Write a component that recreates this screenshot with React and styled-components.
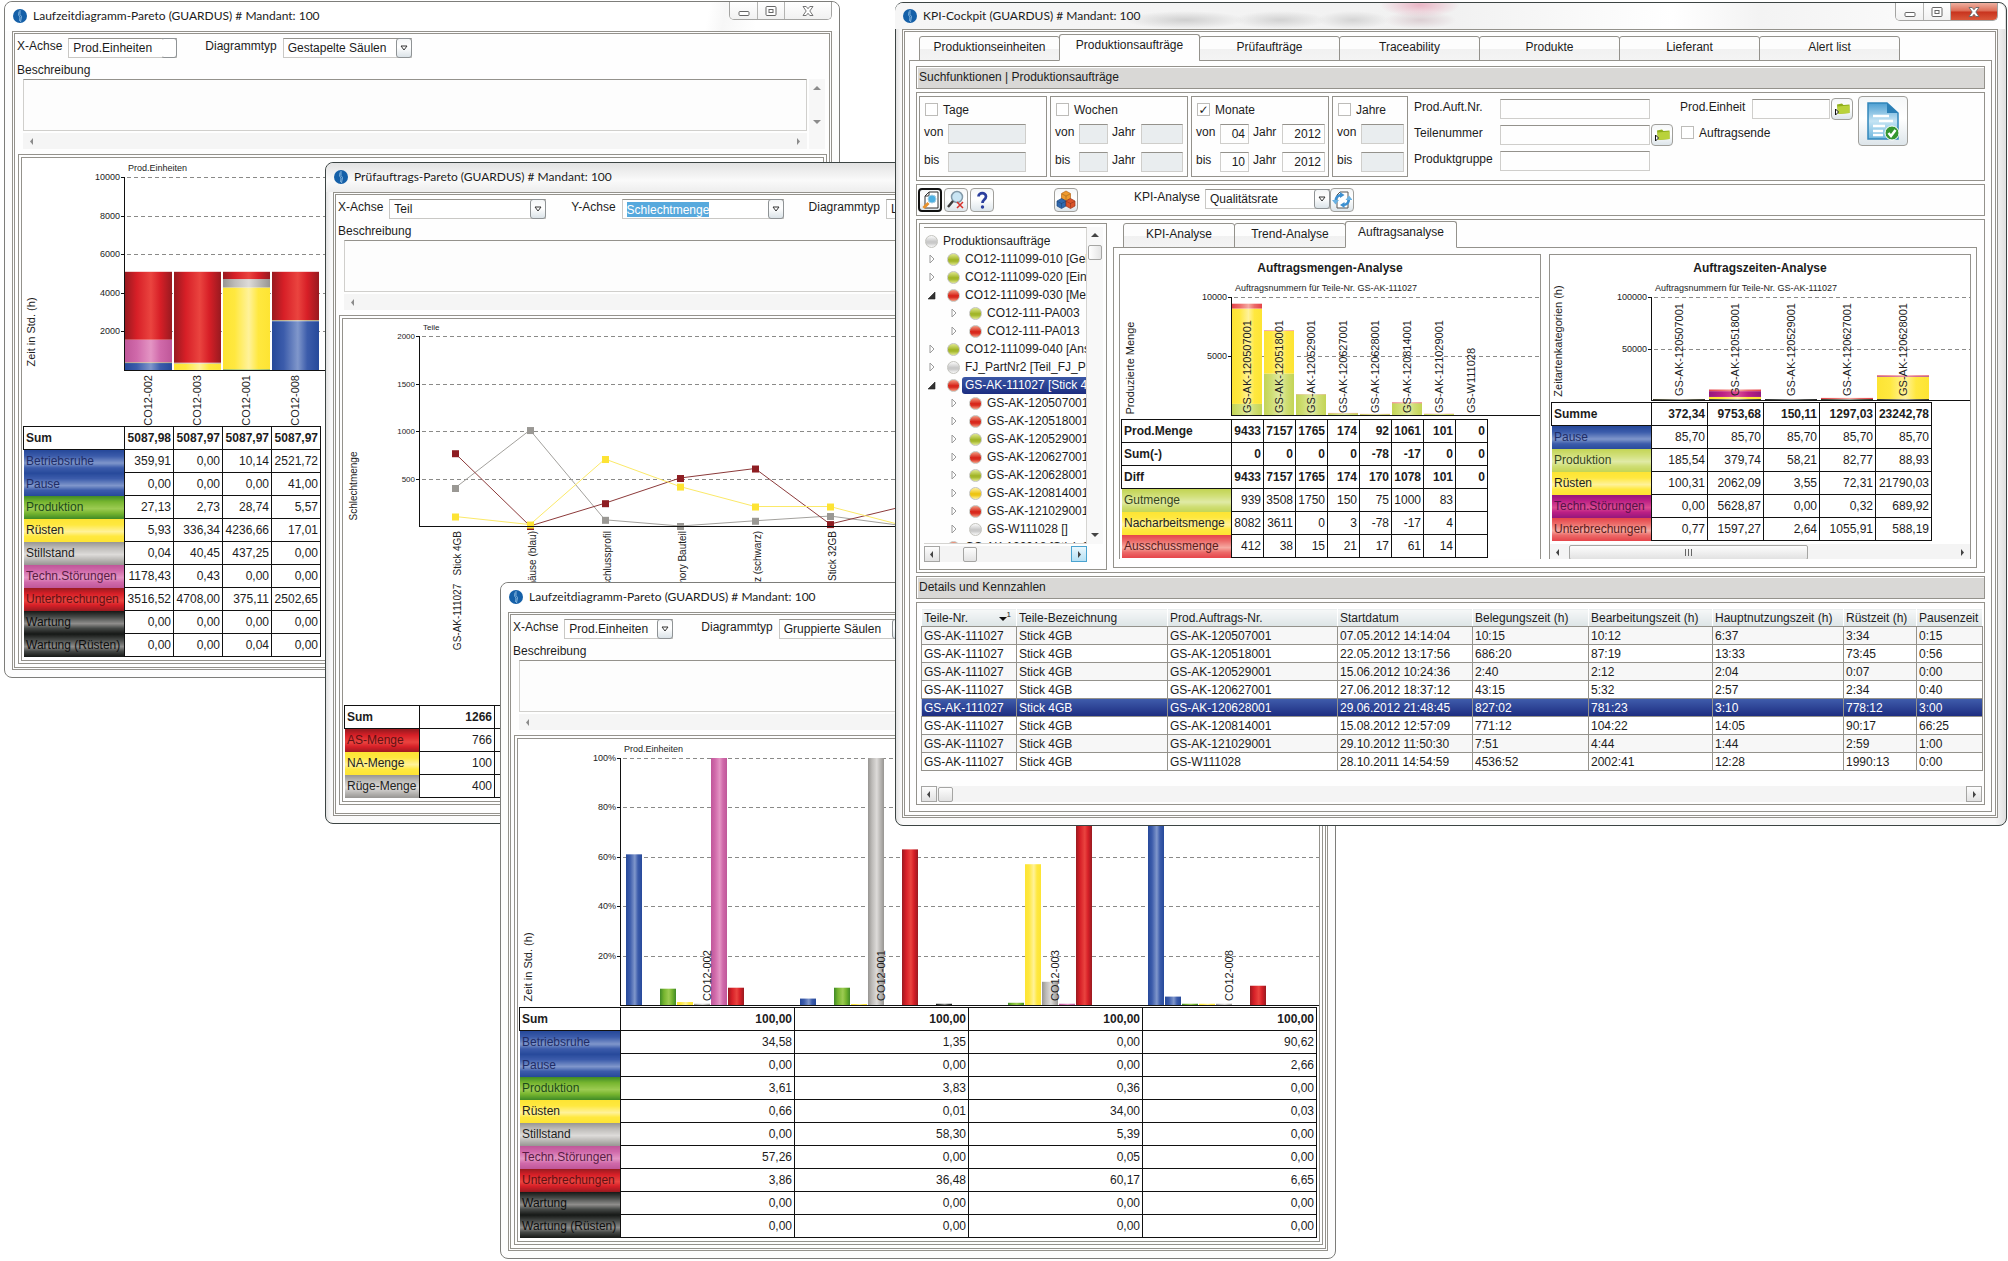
import React, { useId } from 'react';
import styled, { createGlobalStyle, css } from 'styled-components';

const GlobalStyle = createGlobalStyle`
  * {
    box-sizing: border-box;
  }

  body {
    margin: 0;
    background: #fff;
    color: #1c1c1c;
    font: 12px/16px "Liberation Sans", Arial, sans-serif;
  }

  button, input, select, textarea {
    margin: 0;
    font: inherit;
    color: inherit;
    outline: none;
  }
`;

const LINE = '#94928c';

const tones = {
  blue: ['#26499a', '#3c5cab', '#8097cb'],
  red: ['#981a20', '#d71f27', '#ea443f'],
  yellow: ['#fde433', '#ffe83f', '#fff29a'],
  green: ['#3f8a26', '#76b52f', '#9ccb52'],
  grey: ['#979592', '#bdbbb8', '#dddbd9'],
  pink: ['#bf5799', '#d069aa', '#e495c4'],
  black: ['#151816', '#454846', '#8f8e8c'],
  lime: ['#c3d455', '#cfde74', '#e0eaa6'],
  salmon: ['#e5444a', '#ec6a68', '#f6aaa2'],
  magenta: ['#94177c', '#bb1f84', '#dc4a92'],
};

const toneFill = (tone, dir = 'to bottom') => {
  const [edge, body, shine] = tones[tone];
  return `linear-gradient(${dir}, ${edge}, ${body} 25%, ${shine} 55%, ${body} 75%, ${edge})`;
};

/* ---------- windows ---------- */

const Desktop = styled.main`
  position: relative;
  min-height: 100vh;
  overflow: hidden;
  background: #fff;
`;

const WindowBox = styled.section`
  position: absolute;
  left: ${({ $left }) => $left}px;
  top: ${({ $top }) => $top}px;
  ${({ $width }) => ($width ? `width: ${$width}px;` : 'right: 1px;')}
  border: 1px solid ${({ $dark }) => ($dark ? '#3c4443' : '#7d7d7a')};
  border-radius: 8px;
  padding: 0 ${({ $width }) => ($width ? '7px 7px 7px' : '8px 7px 6px')};
  background: ${({ $dark }) =>
    $dark
      ? 'linear-gradient(to right, #e2e2e2, #fafafa 5px, #fff 40%, #f7f7f7 99%, #e0e0e0)'
      : '#fdfdfd'};
`;

const TitleBar = styled.header`
  display: flex;
  align-items: center;
  gap: 6px;
  height: ${({ $height }) => $height}px;
  margin: 0 -7px;
  padding: 0 0 1px 8px;
  border-radius: 8px 8px 0 0;
  background: ${({ $look }) =>
    ({
      plain: 'linear-gradient(100deg, #fff 84%, #f7f7f7 86%, #fff 90%)',
      smoke: 'linear-gradient(to bottom, #e2e2e2, #fafafa 60%, #ededed)',
      cockpit:
        'radial-gradient(ellipse 40px 12px at 525px 2px, #e9b4c4, transparent), radial-gradient(ellipse 60px 9px at 290px 17px, #cfcfcf, transparent), radial-gradient(ellipse 46px 9px at 385px 17px, #d2d2d2, transparent), radial-gradient(ellipse 36px 9px at 458px 17px, #d4d4d4, transparent), radial-gradient(ellipse 36px 9px at 525px 17px, #dccfd3, transparent), linear-gradient(to right, #f6f6f6, #f1f1f1 50%, #fff 70%, #f3f3f3 78%, #fff)',
    })[$look]};

  h2 {
    flex: 1;
    margin: 0;
    font: 12px/18px Lato, "Open Sans", sans-serif;
  }
`;

const CaptionButtons = styled.div`
  display: flex;
  align-self: flex-start;
  height: 18px;
  margin-right: 7px;
  border: 1px solid #a4a4a2;
  border-top: 0;
  border-radius: 0 0 5px 5px;
  overflow: hidden;
`;

const CaptionButton = styled.button`
  display: grid;
  place-items: center;
  width: ${({ $wide }) => ($wide ? 47 : 27)}px;
  padding: 0;
  border: 0;
  border-left: ${({ $first }) => ($first ? 0 : '1px solid #b4b4b2')};
  color: ${({ $red }) => ($red ? '#fff' : '#6b6b6b')};
  background: ${({ $red }) =>
    $red ? 'linear-gradient(#eeb0a0, #dc6c55 48%, #c8331d 52%, #d9573a)' : 'linear-gradient(#fff, #f1f1f1)'};
`;

const Frame = styled.div`
  border: 3px double ${LINE};
  background: #fefefe;
  padding: ${({ $pad }) => $pad};
`;

const Logo = () => (
  <svg width="14" height="14" viewBox="0 0 14 14" aria-hidden="true">
    <circle cx="7" cy="7" r="7" fill="#1560a8" />
    <path d="M7 1v4.500l1.500 2-1 5.500M6 2.500L5.600 6l1.400 2-.4 4" fill="none" stroke="#9cc6e8" strokeWidth=".8" />
  </svg>
);

const Captions = ({ red }) => (
  <CaptionButtons>
    <CaptionButton type="button" aria-label="Minimieren" $first>
      <svg width="12" height="12">
        <rect x="1" y="6.500" width="10" height="4" rx="1" fill="#fff" stroke="#666" />
      </svg>
    </CaptionButton>
    <CaptionButton type="button" aria-label="Maximieren">
      <svg width="12" height="12">
        <rect x="1" y="1.500" width="10" height="9" rx="1" fill="#fff" stroke="#666" />
        <rect x="4" y="4.500" width="4" height="3" fill="#fff" stroke="#666" />
      </svg>
    </CaptionButton>
    <CaptionButton type="button" aria-label="Schließen" $wide $red={red}>
      <svg width="12" height="12">
        <path
          d="M1 1.500h3.200L6 3.700l1.800-2.200H11L7.800 6l3.200 4.500H7.800L6 8.300l-1.800 2.200H1L4.200 6z"
          fill="#fff"
          stroke="#666"
          strokeWidth=".9"
        />
      </svg>
    </CaptionButton>
  </CaptionButtons>
);

const AppWindow = ({ title, look = 'plain', barHeight = 29, captions, closeRed, dark, pad = '0', children, ...pos }) => (
  <WindowBox $left={pos.left} $top={pos.top} $width={pos.width} $dark={dark}>
    <TitleBar $look={look} $height={barHeight}>
      <Logo />
      <h2>{title}</h2>
      {captions && <Captions red={closeRed} />}
    </TitleBar>
    <Frame $pad={pad}>{children}</Frame>
  </WindowBox>
);

/* ---------- form parts ---------- */

const ComboBox = styled.span`
  display: grid;
  grid-template-columns: 1fr 16px;
  flex: none;
  width: ${({ $width }) => $width}px;
  height: 20px;
  border: 1px solid #c9c8c5;
  border-top-color: ${LINE};
  background: #fff;

  select, input {
    grid-area: 1 / 1 / 2 / 3;
    appearance: none;
    min-width: 0;
    height: 18px;
    padding: 0 4px;
    border: 0;
    border-radius: 0;
    background: transparent;
  }

  input {
    justify-self: start;
    align-self: center;
    field-sizing: content;
    height: 15px;
    margin-left: 4px;
    padding: 0;
    background: #57a9dd;
    color: #fff;
  }
`;

const ComboArrow = styled.span`
  grid-area: 1 / 2 / 2 / 3;
  display: grid;
  place-items: center;
  height: 20px;
  margin: -1px -1px 0 1px;
  border: 1px solid #8f9395;
  border-left-color: ${({ $blank }) => ($blank ? '#fff' : '#8f9395')};
  border-radius: 3px;
  pointer-events: none;
  background: ${({ $blank }) => ($blank ? '#fff' : 'linear-gradient(#f4f6f7, #fff 45%, #dbe3e8)')};
`;

const Combo = ({ id, value, width, marked, blank }) => (
  <ComboBox $width={width}>
    {marked ? (
      <input id={id} defaultValue={value} role="combobox" aria-expanded="false" />
    ) : (
      <select id={id} defaultValue={value}>
        <option>{value}</option>
      </select>
    )}
    <ComboArrow $blank={blank}>
      {!blank && (
        <svg width="8" height="6">
          <path d="M1 1h6L4 5z" fill="#fff" stroke="#333" />
        </svg>
      )}
    </ComboArrow>
  </ComboBox>
);

const AxisRow = styled.div`
  display: flex;
  align-items: flex-start;
  gap: ${({ $gap }) => $gap}px;
  height: 24px;
  padding: 4px 0 0 2px;
  overflow: hidden;
  white-space: nowrap;
`;

const LabelledCombo = styled.div`
  display: flex;
  flex: none;
  align-items: flex-start;
  gap: 6px;
`;

const DescLabel = styled.label`
  display: block;
  padding: 4px 0 1px 2px;
`;

const DescArea = styled.div`
  display: grid;
  grid-template: 52px 16px / 1fr 16px;
  gap: 2px;
  padding: 0 4px 0 8px;

  textarea {
    resize: none;
    border: 1px solid #d0cfcc;
    border-top-color: ${LINE};
    background: #fdfdfd;
    overflow: hidden;
  }
`;

const SideScroll = styled.div`
  grid-column: 2;
  grid-row: 1 / 3;
  display: flex;
  flex-direction: column;
  justify-content: space-between;
  align-items: center;
  padding: 5px 0 22px;
  background: #f7f7f7;
`;

const FootScroll = styled.div`
  display: flex;
  justify-content: space-between;
  align-items: center;
  height: 16px;
  padding: 0 5px;
  background: #f5f5f5;
`;

const arrows = {
  left: 'M5 1v7L2 4.500z',
  right: 'M3 1v7l3-3.500z',
  up: 'M0 6h8L4 2z',
  down: 'M0 2h8L4 6z',
};

const Arrow = ({ dir, color = '#8b8b8b' }) => (
  <svg width="8" height="9" aria-hidden="true">
    <path d={arrows[dir]} fill={color} />
  </svg>
);

const Description = () => {
  const id = useId();
  return (
    <>
      <DescLabel htmlFor={id}>Beschreibung</DescLabel>
      <DescArea>
        <textarea id={id} />
        <SideScroll>
          <Arrow dir="up" />
          <Arrow dir="down" />
        </SideScroll>
        <FootScroll>
          <Arrow dir="left" />
          <Arrow dir="right" />
        </FootScroll>
      </DescArea>
    </>
  );
};

const AxisControls = ({ fields, gap }) => {
  const id = useId();
  return (
    <AxisRow $gap={gap}>
      {fields.map((f) => (
        <LabelledCombo key={f.label}>
          <label htmlFor={id + f.label}>{f.label}</label>
          <Combo id={id + f.label} {...f} />
        </LabelledCombo>
      ))}
    </AxisRow>
  );
};

const ChartPanel = styled.div`
  margin: 5px 2px 0 3px;
  padding: 2px;
  border: 1px solid ${LINE};

  > div {
    padding-bottom: 3px;
    border: 1px solid ${LINE};
    background: #fff;
    overflow: hidden;
  }
`;

/* ---------- charts ---------- */

const ChartSvg = styled.svg`
  display: block;
  width: 100%;
  height: ${({ $height }) => $height}px;
  font-size: 9px;
  fill: #1c1c1c;

  .upright {
    font-size: ${({ $upright }) => $upright}px;
  }

  .heading {
    font-size: 12px;
    font-weight: bold;
  }
`;

const Gradients = () => (
  <svg width="0" height="0" style={{ position: 'absolute' }} aria-hidden="true">
    <defs>
      {Object.entries(tones).map(([name, [edge, body, shine]]) => (
        <linearGradient key={name} id={`tone-${name}`}>
          <stop offset="0" stopColor={edge} />
          <stop offset=".25" stopColor={body} />
          <stop offset=".55" stopColor={shine} />
          <stop offset=".75" stopColor={body} />
          <stop offset="1" stopColor={edge} />
        </linearGradient>
      ))}
    </defs>
  </svg>
);

const Upright = ({ x, y, anchor = 'start', children }) => (
  <text
    className="upright"
    transform={`translate(${x} ${y}) rotate(-90)`}
    textAnchor={anchor}
    dominantBaseline="central"
    xmlSpace="preserve"
  >
    {children}
  </text>
);

const Chart = ({ height, axisX, top, base, ticks, heading, caption, yLabel, yLabelAt, upright = 11, small, children }) => (
  <ChartSvg $height={height} $upright={upright}>
    {heading && (
      <text className="heading" x="50%" y="17" textAnchor="middle">
        {heading}
      </text>
    )}
    <text x={axisX + 4} y={top - 6} fontSize={small ? 8 : 9}>
      {caption}
    </text>
    {ticks.map((label, i) => {
      const y = Math.round(top + (i * (base - top)) / ticks.length);
      return (
        <g key={label}>
          <text x={axisX - 4} y={y + 3} textAnchor="end" fontSize={small ? 8 : 9}>
            {label}
          </text>
          <path d={`M${axisX - 3} ${y + 0.5}h3`} stroke="#111" />
          <line x1={axisX + 3} x2="100%" y1={y + 0.5} y2={y + 0.5} stroke="#8a8a88" strokeDasharray="4 3" />
        </g>
      );
    })}
    {children}
    <line x1={axisX + 0.5} x2={axisX + 0.5} y1={top} y2={base} stroke="#111" />
    <line x1={axisX} x2="100%" y1={base + 0.5} y2={base + 0.5} stroke="#111" />
    <Upright x={yLabelAt[0]} y={yLabelAt[1]} anchor="middle">
      {yLabel}
    </Upright>
  </ChartSvg>
);

// values run from the bottom of the stack to its top
const Stack = ({ x, width, base, scale, parts }) => {
  let y = base;
  return parts.map(([tone, value], i) => {
    const h = Math.max(value, 0) * scale;
    y -= h;
    return <rect key={i} x={x} y={y} width={width} height={h} fill={`url(#tone-${tone})`} />;
  });
};

const MatrixTable = styled.table`
  border-collapse: collapse;
  table-layout: fixed;
  width: ${({ $width }) => $width}px;
  margin-left: 1px;
  white-space: nowrap;

  tr {
    height: 23px;
  }

  th, td {
    padding: 0 2px;
    border: 1px solid #111;
    font-weight: normal;
    overflow: hidden;
  }

  th {
    text-align: left;
    padding-right: 0;
  }

  td {
    text-align: right;
  }
`;

const MatrixRow = styled.tr`
  ${({ $bold }) => $bold && css`
    && th, && td {
      font-weight: bold;
    }
  `}

  ${({ $tone }) => $tone && css`
    && th {
      border-top: 0;
      border-bottom: 0;
      border-left-color: transparent;
      background: ${toneFill($tone)};
      color: ${{
        blue: '#202c66',
        green: '#1c4a1c',
        red: '#5f1214',
        pink: '#5a1c44',
        magenta: '#551248',
        salmon: '#5a1c1c',
        black: '#0d0d0d',
        lime: '#36451c',
      }[$tone] || '#22221c'};
    }
  `}
`;

const Matrix = ({ rows, labelWidth, cellWidth, columns }) => (
  <MatrixTable $width={labelWidth + cellWidth * columns}>
    <colgroup>
      <col width={labelWidth} />
      {Array.from({ length: columns }, (_, i) => (
        <col key={i} width={cellWidth} />
      ))}
    </colgroup>
    <tbody>
      {rows.map(({ label, tone, values }) => (
        <MatrixRow key={label} $tone={tone} $bold={!tone}>
          <th scope="row">{label}</th>
          {Array.from({ length: columns }, (_, i) => (
            <td key={i}>{values[i]}</td>
          ))}
        </MatrixRow>
      ))}
    </tbody>
  </MatrixTable>
);

/* ---------- pareto windows ---------- */

const row = (label, tone, text) => ({ label, tone, values: text.split(' ') });

const runtimeRows = [
  row('Sum', null, '5087,98 5087,97 5087,97 5087,97'),
  row('Betriebsruhe', 'blue', '359,91 0,00 10,14 2521,72'),
  row('Pause', 'blue', '0,00 0,00 0,00 41,00'),
  row('Produktion', 'green', '27,13 2,73 28,74 5,57'),
  row('Rüsten', 'yellow', '5,93 336,34 4236,66 17,01'),
  row('Stillstand', 'grey', '0,04 40,45 437,25 0,00'),
  row('Techn.Störungen', 'pink', '1178,43 0,43 0,00 0,00'),
  row('Unterbrechungen', 'red', '3516,52 4708,00 375,11 2502,65'),
  row('Wartung', 'black', '0,00 0,00 0,00 0,00'),
  row('Wartung (Rüsten)', 'black', '0,00 0,00 0,04 0,00'),
];

const percentRows = [
  row('Sum', null, '100,00 100,00 100,00 100,00'),
  row('Betriebsruhe', 'blue', '34,58 1,35 0,00 90,62'),
  row('Pause', 'blue', '0,00 0,00 0,00 2,66'),
  row('Produktion', 'green', '3,61 3,83 0,36 0,00'),
  row('Rüsten', 'yellow', '0,66 0,01 34,00 0,03'),
  row('Stillstand', 'grey', '0,00 58,30 5,39 0,00'),
  row('Techn.Störungen', 'pink', '57,26 0,00 0,05 0,00'),
  row('Unterbrechungen', 'red', '3,86 36,48 60,17 6,65'),
  row('Wartung', 'black', '0,00 0,00 0,00 0,00'),
  row('Wartung (Rüsten)', 'black', '0,00 0,00 0,00 0,00'),
];

const defectRows = [
  row('Sum', null, '1266'),
  row('AS-Menge', 'red', '766'),
  row('NA-Menge', 'yellow', '100'),
  row('Rüge-Menge', 'grey', '400'),
];

const toNumber = (text) => parseFloat(String(text).replace(',', '.')) || 0;

const StackedPareto = () => (
  <AppWindow left={4} top={1} width={836} title="Laufzeitdiagramm-Pareto (GUARDUS) # Mandant: 100" captions pad="0 0 3px">
    <AxisControls
      gap={28}
      fields={[
        { label: 'X-Achse', value: 'Prod.Einheiten', width: 109, blank: true },
        { label: 'Diagrammtyp', value: 'Gestapelte Säulen', width: 129 },
      ]}
    />
    <Description />
    <ChartPanel>
      <div>
        <Chart
          height={268}
          axisX={102}
          top={19}
          base={212}
          ticks={['10000', '8000', '6000', '4000', '2000']}
          caption="Prod.Einheiten"
          yLabel="Zeit in Std. (h)"
          yLabelAt={[9, 174]}
        >
          {['CO12-002', 'CO12-003', 'CO12-001', 'CO12-008'].map((name, i) => (
            <g key={name}>
              <Stack
                x={103 + i * 49}
                width={47}
                base={212}
                scale={0.0193}
                parts={runtimeRows.slice(1).map((r) => [r.tone, toNumber(r.values[i])])}
              />
              <Upright x={126 + i * 49} y={217} anchor="end">
                {name}
              </Upright>
            </g>
          ))}
        </Chart>
        <Matrix rows={runtimeRows} labelWidth={101} cellWidth={49} columns={4} />
      </div>
    </ChartPanel>
  </AppWindow>
);

const defectSeries = [
  { color: '#a3a19d', marker: '#9a9894', values: [400, 1010, 65, 0, 55, 105, 0] },
  { color: '#8c3a3a', marker: '#8e1d22', values: [766, 0, 240, 505, 605, 20, 210] },
  { color: '#fbe968', marker: '#fde334', values: [100, 15, 705, 415, 205, 205, 0] },
];

const defectParts = [
  'GS-AK-111027   Stick 4GB',
  'Gehäuse (blau)',
  'Abschlussprofil',
  'Memory Bauteil',
  'Schutz (schwarz)',
  'Stick 32GB',
];

const LinePareto = () => {
  const px = (i) => 112 + i * 75;
  const py = (v) => 207 - v * 0.095;
  return (
    <AppWindow
      left={325}
      top={162}
      width={836}
      title="Prüfauftrags-Pareto (GUARDUS) # Mandant: 100"
      look="smoke"
      dark
      captions
      pad="0 0 8px"
    >
      <AxisControls
        gap={25}
        fields={[
          { label: 'X-Achse', value: 'Teil', width: 157 },
          { label: 'Y-Achse', value: 'Schlechtmenge', width: 162, marked: true },
          { label: 'Diagrammtyp', value: 'Linien', width: 120 },
        ]}
      />
      <Description />
      <ChartPanel>
        <div>
          <Chart
            height={386}
            axisX={76}
            top={17}
            base={207}
            ticks={['2000', '1500', '1000', '500']}
            caption="Teile"
            yLabel="Schlechtmenge"
            yLabelAt={[10, 167]}
            upright={10}
            small
          >
            {defectSeries.map((s) => (
              <g key={s.color}>
                <polyline points={s.values.map((v, i) => `${px(i)},${py(v)}`).join(' ')} fill="none" stroke={s.color} />
                {s.values.map((v, i) => (
                  <rect key={i} x={px(i) - 3} y={py(v) - 3} width="7" height="7" fill={s.marker} />
                ))}
              </g>
            ))}
            {defectParts.map((name, i) => (
              <Upright key={name} x={114 + i * 75} y={212} anchor="end">
                {name}
              </Upright>
            ))}
          </Chart>
          <Matrix rows={defectRows} labelWidth={75} cellWidth={75} columns={6} />
        </div>
      </ChartPanel>
    </AppWindow>
  );
};

const groupTones = ['blue', 'blue', 'green', 'yellow', 'grey', 'pink', 'red', 'black', 'black'];

const groups = [
  { name: 'CO12-002', bars: [61, 0, 6.6, 1.2, 0.5, 100, 7, 0, 0] },
  { name: 'CO12-001', bars: [2.6, 0, 7, 0.4, 100, 0, 63, 0, 0.5] },
  { name: 'CO12-003', bars: [0, 0, 0.9, 57, 9.4, 0.5, 100, 0, 0] },
  { name: 'CO12-008', bars: [100, 3.4, 0.5, 0.5, 0.5, 0, 7.8, 0, 0] },
];

const GroupedPareto = () => (
  <AppWindow left={500} top={582} width={836} title="Laufzeitdiagramm-Pareto (GUARDUS) # Mandant: 100" captions pad="0 0 3px">
    <AxisControls
      gap={28}
      fields={[
        { label: 'X-Achse', value: 'Prod.Einheiten', width: 109 },
        { label: 'Diagrammtyp', value: 'Gruppierte Säulen', width: 129 },
      ]}
    />
    <Description />
    <ChartPanel>
      <div>
        <Chart
          height={268}
          axisX={102}
          top={19}
          base={266}
          ticks={['100%', '80%', '60%', '40%', '20%']}
          caption="Prod.Einheiten"
          yLabel="Zeit in Std. (h)"
          yLabelAt={[10, 228]}
        >
          {groups.map(({ name, bars }, g) => (
            <g key={name}>
              {bars.map((v, i) => (
                <Stack
                  key={i}
                  x={108 + g * 174 + i * 17}
                  width={16}
                  base={266}
                  scale={2.47}
                  parts={[[groupTones[i], v]]}
                />
              ))}
              <Upright x={189 + g * 174} y={262}>
                {name}
              </Upright>
            </g>
          ))}
        </Chart>
        <Matrix rows={percentRows} labelWidth={101} cellWidth={174} columns={4} />
      </div>
    </ChartPanel>
  </AppWindow>
);

/* ---------- KPI cockpit ---------- */

const TabStrip = styled.div`
  display: flex;
  align-items: flex-end;
  margin-bottom: -1px;
  padding-left: ${({ $indent }) => $indent}px;
`;

const Tab = styled.button`
  flex: 0 1 ${({ $width }) => $width}px;
  height: ${({ $active }) => ($active ? 27 : 25)}px;
  margin-right: -1px;
  padding: 0 0 ${({ $active }) => ($active ? 6 : 3)}px;
  border: 1px solid ${LINE};
  border-bottom-color: ${({ $active }) => ($active ? '#fefefe' : LINE)};
  border-radius: 3px 3px 0 0;
  background: ${({ $active }) =>
    $active ? '#fefefe' : 'linear-gradient(#fdfdfd 50%, #f1f1f1 52%, #f4f4f4)'};
`;

const TabPanel = styled.div`
  display: flex;
  flex-direction: column;
  gap: 3px;
  margin: 0 3px 0 4px;
  padding: 5px 6px 6px;
  border: 1px solid ${LINE};
`;

const Band = styled.h3`
  height: 23px;
  margin: 0;
  padding: 0 2px;
  border: 1px solid ${LINE};
  box-shadow: inset 1px 1px #fff;
  background: #d9d8d6;
  font: 12px/20px "Liberation Sans", Arial, sans-serif;
`;

const Panel = styled.div`
  display: flex;
  padding: ${({ $pad }) => $pad};
  border: 1px solid ${LINE};
`;

const PeriodBox = styled.fieldset`
  display: flex;
  flex-direction: column;
  gap: 8px;
  width: ${({ $width }) => $width}px;
  height: 81px;
  min-width: 0;
  margin: 0 3px 0 0;
  padding: 6px 0 0 4px;
  border: 1px solid ${LINE};
`;

const CheckLabel = styled.label`
  display: flex;
  align-items: center;
  gap: 5px;
  height: 13px;
  padding-left: 1px;

  input {
    display: grid;
    place-items: center;
    appearance: none;
    width: 13px;
    height: 13px;
    border: 1px solid #bdbcb9;
    background: #fff;
  }

  input:checked::after {
    content: "✓";
    font: bold 12px/12px "DejaVu Sans", sans-serif;
  }
`;

const PeriodRow = styled.div`
  display: flex;
  align-items: flex-start;
  height: 20px;

  label:first-child {
    width: 24px;
  }

  label:nth-of-type(2) {
    width: 29px;
    margin-left: 4px;
  }
`;

const TextField = styled.input`
  width: ${({ $width }) => $width}px;
  height: 20px;
  padding: 0 3px;
  border: 1px solid #cfcecb;
  border-top-color: ${LINE};
  border-radius: 0;
  background: ${({ disabled }) => (disabled ? '#e9edef' : '#fefefe')};
  text-align: right;
`;

const Period = ({ width, label, fields, values = [], checked }) => {
  const id = useId();
  return (
    <PeriodBox $width={width}>
      <CheckLabel>
        <input type="checkbox" defaultChecked={checked} />
        {label}
      </CheckLabel>
      {['von', 'bis'].map((edge, r) => (
        <PeriodRow key={edge}>
          {fields.map((w, c) => (
            <React.Fragment key={c}>
              <label htmlFor={`${id}${edge}${c}`}>{c ? 'Jahr' : edge}</label>
              <TextField id={`${id}${edge}${c}`} $width={w} disabled={!checked} defaultValue={values[r]?.[c]} />
            </React.Fragment>
          ))}
        </PeriodRow>
      ))}
    </PeriodBox>
  );
};

const SearchStack = styled.div`
  display: flex;
  flex-direction: column;
  gap: 6px;
  margin-left: ${({ $gap }) => $gap}px;
  padding-top: 3px;
`;

const SearchRow = styled.div`
  display: flex;
  align-items: flex-start;
  height: 20px;
  padding-top: ${({ $check }) => ($check ? 1 : 0)}px;

  > label:not(${CheckLabel}) {
    width: ${({ $label }) => $label}px;
  }
`;

const IconButton = styled.button`
  display: grid;
  place-items: center;
  flex: none;
  width: ${({ $size }) => $size}px;
  height: ${({ $size }) => $size}px;
  padding: 0;
  border: ${({ $strong }) => ($strong ? '2px solid #111' : '1px solid #a09f9b')};
  border-radius: 4px;
  background: linear-gradient(#f5f7f8, #fff 45%, #dde5ea);
`;

const FolderButton = styled(IconButton)`
  width: 22px;
  height: 22px;
  margin: -1px 0 0 1px;
`;

const ReportButton = styled(IconButton)`
  margin-left: 5px;
`;

const Folder = () => (
  <svg width="18" height="18" viewBox="0 0 18 18">
    <path d="M4 4.500l5-1 1.500 1.500 6-.5v8.500L5 14z" fill="#8fae1c" />
    <path d="M4.500 6.500l12-1v7.500L5 14z" fill="#b9d23a" />
    <path d="M2.500 9v6l3-3z" fill="#fff" stroke="#111" />
  </svg>
);

const ReportIcon = () => (
  <svg width="36" height="42" viewBox="0 0 36 42">
    <defs>
      <linearGradient id="sheet" x2="0" y2="1">
        <stop offset="0" stopColor="#4d9fd2" />
        <stop offset=".5" stopColor="#c5e4f4" />
        <stop offset="1" stopColor="#6fb7df" />
      </linearGradient>
    </defs>
    <path d="M3 3h19l11 10v26H3z" fill="url(#sheet)" stroke="#3287bb" strokeWidth="1.500" />
    <path d="M22 3v10h11z" fill="#2b7fb6" />
    <path d="M8 16h16M14 21h14M8 26h12M8 31h10M8 35h10" stroke="#fff" strokeWidth="2.500" />
    <circle cx="27" cy="33" r="7" fill="#35962f" stroke="#fff" />
    <path d="M23.500 33l2.500 3 4.500-6" fill="none" stroke="#fff" strokeWidth="2.500" />
  </svg>
);

const SearchDocIcon = () => (
  <svg width="20" height="20" viewBox="0 0 20 20">
    <path d="M5 6l4-4h9v16H5z" fill="#fff" stroke="#333" />
    <path d="M5 6h4V2" fill="none" stroke="#333" />
    <circle cx="12" cy="9" r="4" fill="#4db0e2" stroke="#a6cfe4" />
    <path d="M8.500 13l-5 5" stroke="#e7922d" strokeWidth="3" />
  </svg>
);

const SearchClearIcon = () => (
  <svg width="20" height="20" viewBox="0 0 20 20">
    <circle cx="11" cy="7" r="5.500" fill="#c9e5f4" stroke="#8299a8" strokeWidth="1.500" />
    <path d="M7 11l-5 6" stroke="#3b3b3b" strokeWidth="2.500" />
    <path d="M11 12l6 6M17 12l-6 6" stroke="#d6312b" strokeWidth="1.500" />
  </svg>
);

const HelpIcon = () => (
  <svg width="20" height="20" viewBox="0 0 20 20">
    <path
      d="M6.500 6.500C6.500 2 14 2 14 6.500c0 3-3.500 3-3.500 6.500"
      fill="none"
      stroke="#2b3f9e"
      strokeWidth="2.700"
    />
    <circle cx="10.500" cy="17" r="1.700" fill="#2b3f9e" />
  </svg>
);

const hexagon = (x, y) => `M${x} ${y - 5}l4.500 2.500v5L${x} ${y + 5}l-4.500-2.500v-5z`;

const CubesIcon = () => (
  <svg width="20" height="20" viewBox="0 0 20 20">
    <path d={hexagon(10, 6)} fill="#ef9a2e" stroke="#b5651a" strokeWidth=".7" />
    <path d={hexagon(5.5, 13.5)} fill="#2f68ae" stroke="#1b4680" strokeWidth=".7" />
    <path d={hexagon(14.5, 13.5)} fill="#d9532a" stroke="#98321a" strokeWidth=".7" />
    <path
      d="M6 4l4 2 4-2M10 6v4M1.500 11.500l4 2 4-2M5.500 13.500v4M10.500 11.500l4 2 4-2M14.500 13.500v4"
      fill="none"
      stroke="#000"
      strokeOpacity=".2"
    />
  </svg>
);

const RefreshIcon = () => (
  <svg width="20" height="20" viewBox="0 0 20 20">
    <path d="M5 5l3-3h8v16H5z" fill="#fff" stroke="#555" />
    <path d="M3.500 11a6.500 6.500 0 0 1 5-6" fill="none" stroke="#3c8fd0" strokeWidth="2.500" />
    <path d="M8 2l4.500 3L8 8z" fill="#3c8fd0" />
    <path d="M17 9a6.500 6.500 0 0 1-5 6" fill="none" stroke="#3c8fd0" strokeWidth="2.500" />
    <path d="M12.500 12L8 15l4.500 3z" fill="#3c8fd0" />
    <path d="M0 10h7l-3.500 4.500zM13.500 10h7L17 5.500z" fill="#69b1e2" />
  </svg>
);

const SearchForm = () => {
  const id = useId();
  return (
    <Panel $pad="3px 2px">
      <Period width={128} label="Tage" fields={[78]} />
      <Period width={138} label="Wochen" fields={[29, 42]} />
      <Period width={138} label="Monate" fields={[29, 43]} values={[['04', '2012'], ['10', '2012']]} checked />
      <Period width={76} label="Jahre" fields={[43]} />
      <SearchStack $gap={3}>
        {['Prod.Auft.Nr.', 'Teilenummer', 'Produktgruppe'].map((label, i) => (
          <SearchRow key={label} $label={86}>
            <label htmlFor={id + label}>{label}</label>
            <TextField id={id + label} $width={150} />
            {i === 1 && (
              <FolderButton type="button" aria-label="Teil wählen">
                <Folder />
              </FolderButton>
            )}
          </SearchRow>
        ))}
      </SearchStack>
      <SearchStack $gap={7}>
        <SearchRow $label={72}>
          <label htmlFor={`${id}unit`}>Prod.Einheit</label>
          <TextField id={`${id}unit`} $width={78} />
          <FolderButton type="button" aria-label="Einheit wählen">
            <Folder />
          </FolderButton>
        </SearchRow>
        <SearchRow $check>
          <CheckLabel>
            <input type="checkbox" />
            Auftragsende
          </CheckLabel>
        </SearchRow>
      </SearchStack>
      <ReportButton type="button" aria-label="Auswertung starten" $size={50}>
        <ReportIcon />
      </ReportButton>
    </Panel>
  );
};

const ToolGroup = styled.div`
  display: flex;
  align-items: flex-start;
  gap: 2px;
  margin-right: ${({ $after }) => $after}px;
`;

const KpiPicker = styled.div`
  display: flex;
  align-items: flex-start;
  padding-top: 1px;

  label {
    width: 71px;
  }
`;

const Toolbar = () => (
  <Panel $pad="3px 1px">
    <ToolGroup $after={60}>
      <IconButton type="button" aria-label="Suchen" $size={24} $strong>
        <SearchDocIcon />
      </IconButton>
      <IconButton type="button" aria-label="Suche löschen" $size={24}>
        <SearchClearIcon />
      </IconButton>
      <IconButton type="button" aria-label="Hilfe" $size={24}>
        <HelpIcon />
      </IconButton>
    </ToolGroup>
    <ToolGroup $after={56}>
      <IconButton type="button" aria-label="Module" $size={24}>
        <CubesIcon />
      </IconButton>
    </ToolGroup>
    <KpiPicker>
      <label htmlFor="kpi">KPI-Analyse</label>
      <Combo id="kpi" value="Qualitätsrate" width={125} />
    </KpiPicker>
    <IconButton type="button" aria-label="Aktualisieren" $size={24}>
      <RefreshIcon />
    </IconButton>
  </Panel>
);

const TreeBox = styled.div`
  display: grid;
  grid-template: 317px 16px / 1fr 16px;
  row-gap: 2px;
  flex: none;
  width: 188px;
  height: 347px;
  margin: 2px 6px 0 0;
  padding: 3px 3px 0 4px;
  border: 1px solid ${LINE};
`;

const TreeList = styled.ul`
  margin: 0;
  padding: 4px 0 0;
  border: 1px solid #d5d4d1;
  border-top-color: ${LINE};
  border-left: 0;
  list-style: none;
  overflow: hidden;
  white-space: nowrap;
`;

const TreeItem = styled.li`
  display: flex;
  align-items: center;
  height: 18px;
  padding-left: ${({ $level }) => Math.max($level - 1, 0) * 22}px;

  > svg {
    flex: none;
    width: ${({ $level }) => ($level ? 22 : 0)}px;
  }
`;

const bullets = {
  grey: ['#fafafa', '#c9c9c9'],
  green: ['#dfe88c', '#a3b62a'],
  red: ['#f29a80', '#d8281c'],
  yellow: ['#fff1a0', '#eec514'],
};

const Bullet = styled.i`
  flex: none;
  width: 13px;
  height: 13px;
  margin: 0 2px 0 1px;
  border: 1px solid #c4c4be;
  border-radius: 50%;
  background: ${({ $color }) =>
    `linear-gradient(${bullets[$color][0]}, ${bullets[$color][1]} 50%, ${bullets[$color][1]} 65%, ${bullets[$color][0]})`};
`;

const ItemText = styled.span`
  flex: 1;
  padding: 0 3px;
  line-height: 17px;

  ${({ $selected }) => $selected && css`
    border-radius: 3px 0 0 3px;
    background: linear-gradient(#3a57a6, #1c2d80);
    color: #fff;
  `}
`;

const tree = [
  [0, 'grey', 'Produktionsaufträge'],
  [1, 'green', 'CO12-111099-010 [Gehäuse]'],
  [1, 'green', 'CO12-111099-020 [Einsatz]'],
  [1, 'red', 'CO12-111099-030 [Memory]', true],
  [2, 'green', 'CO12-111-PA003'],
  [2, 'red', 'CO12-111-PA013'],
  [1, 'green', 'CO12-111099-040 [Anschluss]'],
  [1, 'grey', 'FJ_PartNr2 [Teil_FJ_PartNr2]'],
  [1, 'red', 'GS-AK-111027 [Stick 4GB]', true],
  [2, 'red', 'GS-AK-120507001'],
  [2, 'red', 'GS-AK-120518001'],
  [2, 'green', 'GS-AK-120529001'],
  [2, 'red', 'GS-AK-120627001'],
  [2, 'green', 'GS-AK-120628001'],
  [2, 'yellow', 'GS-AK-120814001'],
  [2, 'red', 'GS-AK-121029001'],
  [2, 'grey', 'GS-W111028 []'],
  [1, 'red', 'GS-AK-120018 [Stick 8GB]'],
];

const VerticalBar = styled.div`
  display: flex;
  flex-direction: column;
  align-items: center;
  padding: 4px 0;
  background: #f8f8f8;

  i {
    width: 14px;
    height: 15px;
    margin: 5px 0 auto;
    border: 1px solid #a5a5a3;
    border-radius: 2px;
    background: linear-gradient(to right, #fff, #e4e4e4);
  }
`;

const HorizontalBar = styled.div`
  display: flex;
  align-items: center;
  height: 16px;
  margin-top: ${({ $gap }) => $gap || 0}px;
  background: #f4f4f4;
`;

const ScrollButton = styled.button`
  display: grid;
  place-items: center;
  width: 16px;
  height: 16px;
  padding: 0;
  border: ${({ $flat }) => ($flat ? '0' : '1px solid #a5a5a3')};
  border-color: ${({ $hot }) => $hot && '#4aa3cf'};
  background: ${({ $flat, $hot }) =>
    $flat ? 'transparent' : $hot ? 'linear-gradient(#eaf7fd, #b5e0f4)' : 'linear-gradient(#fdfdfd, #e2e2e2)'};
`;

const Thumb = styled.i`
  display: grid;
  place-items: center;
  width: ${({ $width }) => $width}px;
  height: 15px;
  margin: 0 auto 0 ${({ $left }) => $left}px;
  border: 1px solid #a5a5a3;
  border-radius: 2px;
  background: linear-gradient(#fdfdfd, #e2e2e2);
`;

const Scroller = ({ left, width, flat, hot, gap, grip }) => (
  <HorizontalBar $gap={gap}>
    <ScrollButton type="button" aria-label="Nach links" $flat={flat}>
      <Arrow dir="left" color="#444" />
    </ScrollButton>
    <Thumb $left={left} $width={width}>
      {grip && (
        <svg width="8" height="7">
          <path d="M.5 0v7M3.500 0v7M6.500 0v7" stroke="#666" />
        </svg>
      )}
    </Thumb>
    <ScrollButton type="button" aria-label="Nach rechts" $flat={flat} $hot={hot}>
      <Arrow dir="right" color="#444" />
    </ScrollButton>
  </HorizontalBar>
);

const OrderTree = () => (
  <TreeBox>
    <TreeList>
      {tree.map(([level, color, text, open]) => (
        <TreeItem key={text} $level={level}>
          <svg height="12" viewBox="0 0 22 12">
            {open ? (
              <path d="M11 3v7H4z" fill="#333" stroke="#222" strokeWidth=".6" />
            ) : (
              <path d="M6 2v8l4-4z" fill="#fff" stroke="#9b9b9b" />
            )}
          </svg>
          <Bullet $color={color} />
          <ItemText $selected={text.startsWith('GS-AK-111027')}>{text}</ItemText>
        </TreeItem>
      ))}
    </TreeList>
    <VerticalBar>
      <Arrow dir="up" color="#444" />
      <i />
      <Arrow dir="down" color="#444" />
    </VerticalBar>
    <Scroller left={23} width={14} hot />
  </TreeBox>
);

const quantityRows = [
  row('Prod.Menge', null, '9433 7157 1765 174 92 1061 101 0'),
  row('Sum(-)', null, '0 0 0 0 -78 -17 0 0'),
  row('Diff', null, '9433 7157 1765 174 170 1078 101 0'),
  row('Gutmenge', 'lime', '939 3508 1750 150 75 1000 83'),
  row('Nacharbeitsmenge', 'yellow', '8082 3611 0 3 -78 -17 4'),
  row('Ausschussmenge', 'salmon', '412 38 15 21 17 61 14'),
];

const timeRows = [
  row('Summe', null, '372,34 9753,68 150,11 1297,03 23242,78'),
  row('Pause', 'blue', '85,70 85,70 85,70 85,70 85,70'),
  row('Produktion', 'lime', '185,54 379,74 58,21 82,77 88,93'),
  row('Rüsten', 'yellow', '100,31 2062,09 3,55 72,31 21790,03'),
  row('Techn.Störungen', 'magenta', '0,00 5628,87 0,00 0,32 689,92'),
  row('Unterbrechungen', 'salmon', '0,77 1597,27 2,64 1055,91 588,19'),
];

const orders = [
  'GS-AK-120507001',
  'GS-AK-120518001',
  'GS-AK-120529001',
  'GS-AK-120627001',
  'GS-AK-120628001',
  'GS-AK-120814001',
  'GS-AK-121029001',
  'GS-W111028',
];

const Analysis = styled.div`
  flex: 1;
  min-width: 0;
  margin-right: 5px;
`;

const AnalysisPanel = styled.div`
  display: flex;
  gap: 8px;
  height: 321px;
  padding: 6px 5px;
  border: 1px solid ${LINE};
`;

const AnalysisCard = styled.div`
  flex: 1;
  min-width: 0;
  height: 305px;
  border: 1px solid ${LINE};
  border-bottom: 0;
  background: #fff;
  overflow: hidden;
`;

const OrderAnalysis = () => (
  <Analysis>
    <TabStrip $indent={10} role="tablist">
      {['KPI-Analyse', 'Trend-Analyse', 'Auftragsanalyse'].map((name, i) => (
        <Tab key={name} type="button" role="tab" $width={112} $active={i === 2}>
          {name}
        </Tab>
      ))}
    </TabStrip>
    <AnalysisPanel>
      <AnalysisCard>
        <Chart
          height={164}
          axisX={111}
          top={42}
          base={160}
          ticks={['10000', '5000']}
          heading="Auftragsmengen-Analyse"
          caption="Auftragsnummern für Teile-Nr. GS-AK-111027"
          yLabel="Produzierte Menge"
          yLabelAt={[10, 113]}
        >
          {orders.map((name, i) => (
            <g key={name}>
              <Stack
                x={112 + i * 32}
                width={30}
                base={160}
                scale={0.0118}
                parts={quantityRows.slice(3).map((r) => [r.tone, toNumber(r.values[i])])}
              />
              <Upright x={127 + i * 32} y={158}>
                {name}
              </Upright>
            </g>
          ))}
        </Chart>
        <Matrix rows={quantityRows} labelWidth={110} cellWidth={32} columns={8} />
      </AnalysisCard>
      <AnalysisCard>
        <Chart
          height={147}
          axisX={101}
          top={42}
          base={145}
          ticks={['100000', '50000']}
          heading="Auftragszeiten-Analyse"
          caption="Auftragsnummern für Teile-Nr. GS-AK-111027"
          yLabel="Zeitartenkategorien (h)"
          yLabelAt={[8, 86]}
        >
          {orders.slice(0, 5).map((name, i) => (
            <g key={name}>
              <Stack
                x={103 + i * 56}
                width={52}
                base={145}
                scale={0.00103}
                parts={[['black', 900], ...timeRows.slice(3).map((r) => [r.tone, toNumber(r.values[i])])]}
              />
              <Upright x={129 + i * 56} y={141}>
                {name}
              </Upright>
            </g>
          ))}
        </Chart>
        <Matrix rows={timeRows} labelWidth={100} cellWidth={56} columns={5} />
        <Scroller left={3} width={239} gap={3} flat grip />
      </AnalysisCard>
    </AnalysisPanel>
  </Analysis>
);

const DetailsPanel = styled.div`
  height: 203px;
  padding: 5px 2px 0 4px;
  border: 1px solid ${LINE};
`;

const DetailsTable = styled.table`
  width: 100%;
  border-collapse: collapse;
  table-layout: fixed;
  white-space: nowrap;

  th, td {
    height: 18px;
    padding: 0 2px;
    border: 1px solid ${LINE};
    font-weight: normal;
    line-height: 16px;
    text-align: left;
    overflow: hidden;
  }

  th {
    border-color: #fff;
    border-bottom-color: ${LINE};
    background: linear-gradient(#f6f8f8, #dde4e6);
  }

  sup {
    font-size: 8px;
    line-height: 8px;
  }
`;

const SortMark = styled.span`
  float: right;
  padding-right: 3px;
`;

const DetailsRow = styled.tr`
  background: #fff;

  &:nth-child(odd) {
    background: #f7f7f7;
  }

  ${({ $selected }) => $selected && css`
    && {
      background: linear-gradient(#3f5cab, #1b2a7e);
      color: #fff;
    }

    && td {
      border-left-color: #c9cde0;
      border-top-color: #c9cde0;
    }
  `}
`;

const detailColumns = [
  ['Teile-Nr.', 95],
  ['Teile-Bezeichnung', 151],
  ['Prod.Auftrags-Nr.', 170],
  ['Startdatum', 135],
  ['Belegungszeit (h)', 116],
  ['Bearbeitungszeit (h)', 124],
  ['Hauptnutzungszeit (h)', 131],
  ['Rüstzeit (h)', 73],
  ['Pausenzeit', 66],
];

const details = [
  ['GS-AK-120507001', '07.05.2012 14:14:04', '10:15', '10:12', '6:37', '3:34', '0:15'],
  ['GS-AK-120518001', '22.05.2012 13:17:56', '686:20', '87:19', '13:33', '73:45', '0:56'],
  ['GS-AK-120529001', '15.06.2012 10:24:36', '2:40', '2:12', '2:04', '0:07', '0:00'],
  ['GS-AK-120627001', '27.06.2012 18:37:12', '43:15', '5:32', '2:57', '2:34', '0:40'],
  ['GS-AK-120628001', '29.06.2012 21:48:45', '827:02', '781:23', '3:10', '778:12', '3:00'],
  ['GS-AK-120814001', '15.08.2012 12:57:09', '771:12', '104:22', '14:05', '90:17', '66:25'],
  ['GS-AK-121029001', '29.10.2012 11:50:30', '7:51', '4:44', '1:44', '2:59', '1:00'],
  ['GS-W111028', '28.10.2011 14:54:59', '4536:52', '2002:41', '12:28', '1990:13', '0:00'],
];

const Details = () => (
  <DetailsPanel>
    <DetailsTable>
      <colgroup>
        {detailColumns.map(([name, width]) => (
          <col key={name} width={width} />
        ))}
      </colgroup>
      <thead>
        <tr>
          {detailColumns.map(([name], i) => (
            <th key={name} scope="col">
              {name}
              {i === 0 && (
                <SortMark>
                  <svg width="8" height="6">
                    <path d="M0 1h8L4 5z" fill="#111" />
                  </svg>
                  <sup>1</sup>
                </SortMark>
              )}
            </th>
          ))}
        </tr>
      </thead>
      <tbody>
        {details.map((cells) => (
          <DetailsRow key={cells[0]} $selected={cells[0] === 'GS-AK-120628001'}>
            {['GS-AK-111027', 'Stick 4GB', ...cells].map((cell, i) => (
              <td key={i}>{cell}</td>
            ))}
          </DetailsRow>
        ))}
      </tbody>
    </DetailsTable>
    <Scroller left={1} width={15} gap={15} />
  </DetailsPanel>
);

const mainTabs = [
  'Produktionseinheiten',
  'Produktionsaufträge',
  'Prüfaufträge',
  'Traceability',
  'Produkte',
  'Lieferant',
  'Alert list',
];

const Cockpit = () => (
  <AppWindow
    left={895}
    top={2}
    title="KPI-Cockpit (GUARDUS) # Mandant: 100"
    look="cockpit"
    barHeight={26}
    dark
    captions
    closeRed
    pad="2px 0 3px"
  >
    <TabStrip $indent={14} role="tablist">
      {mainTabs.map((name, i) => (
        <Tab key={name} type="button" role="tab" $width={141} $active={i === 1}>
          {name}
        </Tab>
      ))}
    </TabStrip>
    <TabPanel>
      <Band>Suchfunktionen | Produktionsaufträge</Band>
      <SearchForm />
      <Toolbar />
      <Panel $pad="1px 2px 2px">
        <OrderTree />
        <OrderAnalysis />
      </Panel>
      <Band>Details und Kennzahlen</Band>
      <Details />
    </TabPanel>
  </AppWindow>
);

const App = () => (
  <>
    <GlobalStyle />
    <Gradients />
    <Desktop>
      <StackedPareto />
      <LinePareto />
      <GroupedPareto />
      <Cockpit />
    </Desktop>
  </>
);

export default App;
